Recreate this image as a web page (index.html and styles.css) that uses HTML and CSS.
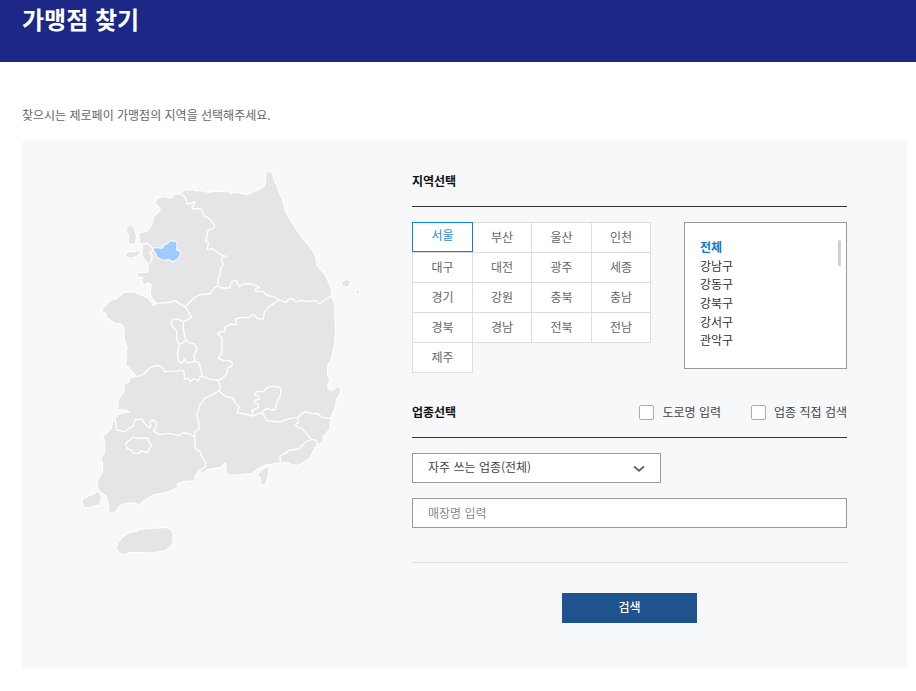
FILE: index.html
```html
<!DOCTYPE html>
<html lang="ko">
<head>
<meta charset="utf-8">
<meta name="viewport" content="width=device-width, initial-scale=1">
<title>가맹점 찾기</title>
<link rel="stylesheet" href="styles.css">
</head>
<body>
<header class="page-header"><h1>가맹점 찾기</h1></header>
<main class="page">
  <p class="intro">찾으시는 제로페이 가맹점의 지역을 선택해주세요.</p>
  <div class="panel">
    <div class="map">
      <svg viewBox="0 0 900 1200" role="img" aria-label="대한민국 지도">
        <g class="land">
          <path d="M332 103L337 96L345 92L372 91L378 95L385 93L402 95L415 99L432 96L475 97L483 103L488 98L510 101L532 106L550 97L568 91L583 80L589 70L588 45L593 37L603 37L608 50L612 65L620 78L626 100L637 122L645 155L665 190L695 235L725 270L736 290L740 318L762 342L775 368L782 385L782 410L792 430L795 520L790 565L782 595L771 618L771 645L778 663L771 678L773 688L785 694L795 688L805 679L811 688L808 702L798 718L793 745L780 775L778 808L760 825L756 845L743 852L732 865L720 890L705 903L682 915L663 913L660 907L630 907L590 913L565 923L545 938L520 941L480 944L470 938L468 910L463 907L456 919L430 924L408 928L402 938L385 930L374 948L374 960L340 963L318 972L324 980L290 996L250 1003L225 1018L207 1033L190 1027L165 1029L145 1038L137 1053L127 1060L118 1053L117 1035L110 1008L95 998L82 982L85 960L98 938L100 910L94 895L105 882L106 850L102 828L125 808L130 785L135 778L145 765L158 760L185 758L170 750L146 746L145 732L148 715L165 695L163 672L178 668L180 656L203 650L190 635L168 612L172 590L169 580L173 562L165 540L164 505L158 494L150 490L135 488L112 472L110 460L97 454L103 442L118 425L140 418L160 400L190 397L215 407L235 417L250 438L263 430L248 415L242 398L245 372L232 366L225 374L218 366L220 352L202 349L203 340L235 338L237 325L234 310L225 298L217 285L219 253L210 248L208 220L232 215L247 195L252 170L273 152L270 143L258 130L262 118L280 112L305 116L312 105Z"/>
          <path d="M183 196L192 205L197 225L196 250L180 251L176 243L177 225L171 213L173 200Z"/>
          <path d="M168 284L175 277L190 277L208 272L210 277L200 288L182 293L168 289Z"/>
          <path d="M38 1025L42 1016L55 1010L70 1005L80 996L88 1000L93 1010L90 1028L87 1035L78 1034L65 1040L45 1041L39 1035Z"/>
          <path d="M140 1165L145 1150L160 1132L180 1118L202 1115L210 1110L250 1106L290 1104L303 1111L308 1122L307 1148L298 1161L285 1170L250 1177L175 1175L168 1181L150 1180Z"/>
          <path d="M595 922L592 950L587 970L580 976L573 968L573 953L563 945L575 932L586 924Z"/>
          <path d="M814 370L820 364L831 361L840 364L838 374L832 380L820 378Z"/>
          <ellipse cx="863" cy="396" rx="4" ry="5"/>
        </g>
        <g class="borders">
          <path d="M332 103L345 110L352 132L362 130L374 125L372 134L366 141L368 148L382 145L396 149L400 166L418 176L434 196L430 205L418 209L412 216L411 230L407 242L415 250L412 268L425 266L440 275L452 284L470 290L455 293L454 303L460 312L452 325L452 342L445 355L443 378"/>
          <path d="M443 378L435 382L425 395L420 402L390 404L375 412L345 440L330 432L315 422L308 426L263 430"/>
          <path d="M443 378L455 384L480 384L483 368L493 362L500 363L507 380L518 372L545 371L568 382L555 388L558 394L580 394L588 405L610 410L630 420L648 427L658 417L668 416L678 426L690 421L710 424L735 422L750 433L762 420L782 410"/>
          <path d="M630 420L612 430L595 442L583 458L580 477L562 476L553 466L545 464L537 473L515 472L498 477L498 495L482 492L465 502L465 515L452 514L443 522L455 532L456 575L445 595L460 601L477 602L485 606L487 618L473 623L470 642L455 657L443 660L420 658L397 649"/>
          <path d="M345 440L358 460L365 472L355 478L340 485L340 510L348 540L360 549L372 552L382 565L372 588L375 603L388 610L397 649"/>
          <path d="M340 485L325 478L308 478L304 488L308 502L320 512L320 540L328 552L337 550L348 540M328 552L323 580L325 602L335 610L339 605L343 597L350 608L360 608L375 603"/>
          <path d="M203 650L222 642L240 623L262 616L275 620L285 635L305 634L338 631L343 640L343 658L353 655L362 664L370 656L385 662L390 650L397 649"/>
          <path d="M443 660L452 680L447 693L468 710L490 714L495 728L508 740L501 758L525 762L550 768L560 763L575 758L582 765L590 782L630 786L660 775L685 772L695 760L710 755L725 760L745 762L755 772L780 775"/>
          <path d="M550 768L546 752L565 743L564 732L553 726L555 720L568 718L567 709L553 705L560 695L582 695L588 685L600 679L625 680L632 688L632 705L622 722L615 748L605 750L592 745L583 750L575 758"/>
          <path d="M685 772L685 786L677 795L680 800L695 805L725 838L736 840L743 852M725 838L710 844L685 867L660 870L645 880L630 888L632 907"/>
          <path d="M447 693L425 705L405 715L390 735L380 765L386 785L387 808L375 815L374 832L375 865L390 875L396 890L408 908L405 922L385 932"/>
          <path d="M135 778L140 810L165 815L175 806L190 798L195 780L215 777L228 795L238 803L244 797L238 790L241 783L250 780L260 788L257 805L250 812L268 824L295 820L325 826L340 818L360 822L374 832"/>
          <path d="M167 853L172 845L188 832L208 835L233 834L236 844L245 855L232 877L212 873L207 880L190 879L185 872L172 866Z"/>
          <path d="M219 252L232 250L243 261L251 267L239 282L247 286L244 304L236 310"/>
        </g>
        <path class="selected-region" d="M249 267L258 265L278 266L284 255L293 253L300 244L318 246L320 255L318 268L322 274L330 274L328 287L322 296L308 304L298 297L280 299L262 291L258 280Z"/>
      </svg>
    </div>
    <form class="search" onsubmit="return false">
      <div class="section-head"><h2>지역선택</h2></div>
      <div class="areas">
        <div class="regions">
          <button type="button" class="region selected">서울</button>
          <button type="button" class="region">부산</button>
          <button type="button" class="region">울산</button>
          <button type="button" class="region">인천</button>
          <button type="button" class="region">대구</button>
          <button type="button" class="region">대전</button>
          <button type="button" class="region">광주</button>
          <button type="button" class="region">세종</button>
          <button type="button" class="region">경기</button>
          <button type="button" class="region">강원</button>
          <button type="button" class="region">충북</button>
          <button type="button" class="region">충남</button>
          <button type="button" class="region">경북</button>
          <button type="button" class="region">경남</button>
          <button type="button" class="region">전북</button>
          <button type="button" class="region">전남</button>
          <button type="button" class="region">제주</button>
        </div>
        <div class="districts">
          <ul>
            <li><a class="current" href="#">전체</a></li>
            <li><a href="#">강남구</a></li>
            <li><a href="#">강동구</a></li>
            <li><a href="#">강북구</a></li>
            <li><a href="#">강서구</a></li>
            <li><a href="#">관악구</a></li>
          </ul>
          <span class="scroll-thumb"></span>
        </div>
      </div>
      <div class="section-head">
        <h2>업종선택</h2>
        <div class="checks">
          <label><input type="checkbox">도로명 입력</label>
          <label><input type="checkbox">업종 직접 검색</label>
        </div>
      </div>
      <div class="fields">
        <div class="select-box">
          <select aria-label="업종">
            <option>자주 쓰는 업종(전체)</option>
          </select>
          <svg class="chevron" viewBox="0 0 12 8" aria-hidden="true"><path d="M1 1.5L6 5.8L11 1.5"/></svg>
        </div>
        <input class="store" type="text" placeholder="매장명 입력" aria-label="매장명">
      </div>
      <div class="actions"><button type="submit" class="submit">검색</button></div>
    </form>
  </div>
</main>
</body>
</html>
```
FILE: styles.css
```css
* {
  box-sizing: border-box;
}

body {
  margin: 0;
  background: #fff;
  color: #666;
  font: 12px/18px "Noto Sans CJK KR", sans-serif;
}

button,
input,
select {
  margin: 0;
  font: inherit;
}

h1,
h2,
p,
ul {
  margin: 0;
  padding: 0;
}

.page-header {
  height: 62px;
  padding: 1px 22px;
  background: #1d2786;
}

h1 {
  color: #fff;
  font-size: 24px;
  line-height: 36px;
}

.page {
  padding: 44px 9px 23px 22px;
}

.intro {
  margin-bottom: 17px;
}

.panel {
  display: flex;
  padding: 31px 60px 45px 0;
  background: #f7f8fa;
}

/* Map */
.map {
  flex: none;
  width: 390px;
  margin-top: -12px;
  padding: 0 42px 0 48px;
}

.map svg {
  display: block;
  width: 100%;
}

.land path,
.land ellipse {
  fill: #e5e5e5;
  stroke: #fff;
  stroke-width: 6;
  stroke-linejoin: round;
  paint-order: stroke;
}

.borders path {
  fill: none;
  stroke: #fff;
  stroke-width: 4;
  stroke-linejoin: round;
}

.map .selected-region {
  fill: #9fccff;
  stroke: #fff;
  stroke-width: 6;
  stroke-linejoin: round;
  paint-order: stroke;
}

/* Search form */
.search {
  flex: 1;
  min-width: 0;
}

.section-head {
  display: flex;
  justify-content: space-between;
  align-items: center;
  margin-bottom: 15px;
  padding-bottom: 16px;
  border-bottom: 1px solid #333;
}

h2 {
  color: #111;
  font-size: 12px;
  line-height: 18px;
}

.areas {
  display: flex;
  justify-content: space-between;
  align-items: flex-start;
  margin-bottom: 30px;
}

.regions {
  display: grid;
  grid-template-columns: 60px 59px 60px 59px;
  grid-auto-rows: 30px;
  padding: 0 1px 1px 0;
}

.region {
  margin: 0 -1px -1px 0;
  padding: 0 0 2px;
  border: 1px solid #ddd;
  background: #fff;
  color: #666;
}

.region.selected {
  z-index: 1;
  margin-bottom: 0;
  padding-bottom: 4px;
  border-color: #0a85cf;
  color: #2f86dd;
}

.districts {
  display: flex;
  justify-content: space-between;
  width: 163px;
  height: 147px;
  padding: 15px 5px 0 15px;
  border: 1px solid #999;
  background: #fff;
}

.districts ul {
  display: grid;
  grid-auto-rows: 1fr;
  align-items: start;
  height: 112px;
  list-style: none;
}

.districts a {
  display: block;
  color: #333;
  text-decoration: none;
}

.districts .current {
  color: #0a7ad1;
  font-weight: 700;
}

.scroll-thumb {
  width: 3px;
  height: 26px;
  margin-top: 2px;
  border-radius: 2px;
  background: #d0d0d0;
}

.checks {
  display: flex;
  gap: 30px;
}

.checks label {
  display: flex;
  align-items: center;
  gap: 8px;
  color: #444;
}

.checks input {
  appearance: none;
  width: 15px;
  height: 15px;
  border: 1px solid #aaa;
  border-radius: 2px;
  background: #fff;
}

.fields {
  display: grid;
  gap: 15px;
  padding-bottom: 34px;
  border-bottom: 1px solid #ddd;
}

.select-box {
  position: relative;
  width: 249px;
}

.select-box select,
.store {
  display: block;
  width: 100%;
  height: 30px;
  padding: 0 15px 2px;
  border: 1px solid #999;
  border-radius: 0;
  background: #fff;
  color: #444;
}

.select-box select {
  appearance: none;
}

.store::placeholder {
  color: #888;
}

.chevron {
  position: absolute;
  top: 12px;
  right: 16px;
  width: 12px;
  height: 8px;
  pointer-events: none;
}

.chevron path {
  fill: none;
  stroke: #666;
  stroke-width: 2;
}

.actions {
  display: flex;
  justify-content: center;
  padding-top: 30px;
}

.submit {
  width: 135px;
  height: 30px;
  padding: 0 0 2px;
  border: 0;
  background: #1e538e;
  color: #fff;
  font-weight: 500;
}
```
